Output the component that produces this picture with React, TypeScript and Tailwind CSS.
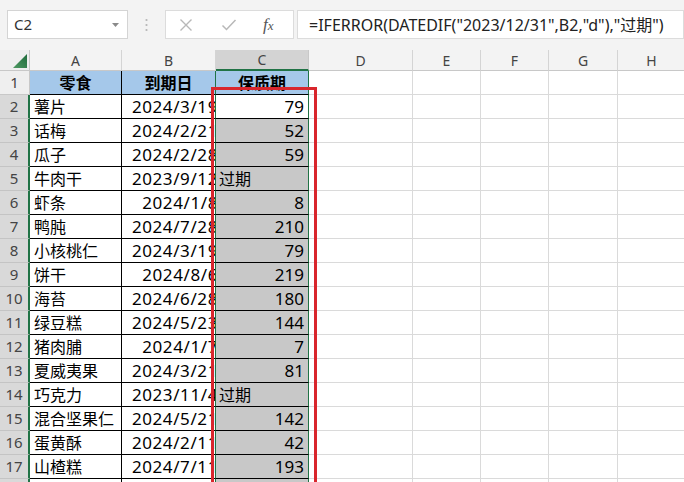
import React from "react";

type Row = [string, string, string];

const rows: Row[] = [
  ["薯片", "2024/3/19", "79"],
  ["话梅", "2024/2/21", "52"],
  ["瓜子", "2024/2/28", "59"],
  ["牛肉干", "2023/9/12", "过期"],
  ["虾条", "2024/1/8", "8"],
  ["鸭肫", "2024/7/28", "210"],
  ["小核桃仁", "2024/3/19", "79"],
  ["饼干", "2024/8/6", "219"],
  ["海苔", "2024/6/28", "180"],
  ["绿豆糕", "2024/5/23", "144"],
  ["猪肉脯", "2024/1/7", "7"],
  ["夏威夷果", "2024/3/21", "81"],
  ["巧克力", "2023/11/4", "过期"],
  ["混合坚果仁", "2024/5/21", "142"],
  ["蛋黄酥", "2024/2/11", "42"],
  ["山楂糕", "2024/7/11", "193"],
  ["", "", ""],
];

const letters = ["A", "B", "C", "D", "E", "F", "G", "H"];
const font = { fontFamily: '"Noto Sans", "Noto Sans CJK SC", sans-serif' };

function EmptyCells() {
  return (
    <>
      {[0, 1, 2, 3, 4].map((i) => (
        <div key={i} className="h-[24px] border-r border-b border-[#dadada] bg-white" />
      ))}
    </>
  );
}

export default function App() {
  return (
    <div className="w-[684px] h-[482px] overflow-hidden bg-white text-black" style={font}>
      {/* formula bar */}
      <div className="h-[50px] bg-[#f3f3f3] flex items-start pt-[10px]">
        <div className="ml-[7px] w-[121px] h-[29px] bg-white border border-[#d4d4d4] flex items-center justify-between pl-[6px] pr-[8px]">
          <span className="text-[15px] text-[#333]">C2</span>
          <svg width="7" height="4" viewBox="0 0 7 4">
            <path d="M0 0 L7 0 L3.5 4 Z" fill="#8a8a8a" />
          </svg>
        </div>
        <div className="w-[37px] h-[29px] flex items-center justify-center">
          <svg width="3" height="14" viewBox="0 0 3 14">
            <circle cx="1.5" cy="2" r="1.1" fill="#b5b5b5" />
            <circle cx="1.5" cy="7" r="1.1" fill="#b5b5b5" />
            <circle cx="1.5" cy="12" r="1.1" fill="#b5b5b5" />
          </svg>
        </div>
        <div className="w-[129px] h-[29px] bg-white border border-[#dcdcdc] flex items-center">
          <svg className="ml-[13px]" width="14" height="14" viewBox="0 0 14 14">
            <path d="M1.5 1.5 L12.5 12.5 M12.5 1.5 L1.5 12.5" stroke="#b8b8b8" strokeWidth="1.4" />
          </svg>
          <svg className="ml-[28px]" width="16" height="14" viewBox="0 0 16 14">
            <path d="M1.5 7.5 L5.5 11.5 L14.5 2" stroke="#b8b8b8" strokeWidth="1.5" fill="none" />
          </svg>
          <span
            className="ml-[26px] text-[17px] italic text-[#555]"
            style={{ fontFamily: '"Liberation Serif", serif' }}
          >
            f<span className="text-[13px]">x</span>
          </span>
        </div>
        <div className="ml-[3px] flex-1 h-[29px] bg-white border border-[#dcdcdc] flex items-center pl-[11px] whitespace-nowrap overflow-hidden">
          <span className="text-[16px] text-[#222]">
            =IFERROR(DATEDIF("2023/12/31",B2,"d"),"过期")
          </span>
        </div>
      </div>

      {/* sheet */}
      <div className="relative">
        <div className="grid grid-cols-[30px_92px_94px_93px_104px_68px_68px_69px_68px]">
          {/* column headers */}
          <div className="h-[21px] bg-[#efefef] border-r border-b border-[#c8c8c8] relative">
            <svg className="absolute right-[2px] bottom-[2px]" width="14" height="14" viewBox="0 0 14 14">
              <defs>
                <linearGradient id="corner" x1="0" y1="1" x2="1" y2="0">
                  <stop offset="0" stopColor="#4f9a63" />
                  <stop offset="1" stopColor="#1f6b3c" />
                </linearGradient>
              </defs>
              <path d="M0 14 L14 14 L14 0 Z" fill="url(#corner)" />
            </svg>
          </div>
          {letters.map((l) =>
            l === "C" ? (
              <div
                key={l}
                className="h-[21px] bg-[#d3d3d3] border-r border-[#c8c8c8] border-b-2 border-b-[#217346] flex items-center justify-center text-[14px] text-[#444]"
              >
                {l}
              </div>
            ) : (
              <div
                key={l}
                className="h-[21px] bg-[#f3f3f3] border-r border-[#d4d4d4] border-b border-b-[#c8c8c8] flex items-center justify-center text-[14px] text-[#444]"
              >
                {l}
              </div>
            )
          )}

          {/* header row 1 */}
          <div className="h-[24px] bg-[#efefef] border-r border-b border-[#c8c8c8] flex items-center justify-center text-[15px] text-[#444]">
            1
          </div>
          <div className="h-[24px] bg-[#a5c8ea] border-r border-b border-black flex items-center justify-center text-[16px] font-bold">
            零食
          </div>
          <div className="h-[24px] bg-[#a5c8ea] border-r border-b border-r-[#217346] border-b-black flex items-center justify-center text-[16px] font-bold">
            到期日
          </div>
          <div className="h-[24px] bg-[#a5c8ea] border-r border-b border-r-[#217346] border-b-black flex items-center justify-center text-[16px] font-bold">
            保质期
          </div>
          <EmptyCells />

          {/* data rows */}
          {rows.map(([name, date, days], i) => {
            const n = i + 2;
            const active = n === 2;
            const isText = days === "过期";
            return (
              <React.Fragment key={n}>
                <div className="h-[24px] bg-[#d9d9d9] border-r-2 border-r-[#217346] border-b border-b-[#c4c4c4] flex items-center justify-center text-[15px] text-[#444]">
                  {n}
                </div>
                <div className="h-[24px] bg-white border-r border-b border-black flex items-center pl-[4px] text-[16px] whitespace-nowrap overflow-hidden">
                  {name}
                </div>
                <div className="h-[24px] bg-white border-r border-b border-r-[#217346] border-b-black flex items-center justify-end text-[17px] tracking-[0.6px] whitespace-nowrap overflow-hidden">
                  <span className="-mr-[3px]">{date}</span>
                </div>
                <div
                  className={
                    active
                      ? "h-[24px] bg-white border-r border-b border-r-[#217346] border-b-black flex items-center justify-end pr-[4px] text-[17px]"
                      : isText
                      ? "h-[24px] bg-[#c8c8c8] border-r border-b border-r-[#217346] border-b-black flex items-center justify-start pl-[3px] text-[16px]"
                      : "h-[24px] bg-[#c8c8c8] border-r border-b border-r-[#217346] border-b-black flex items-center justify-end pr-[4px] text-[17px]"
                  }
                >
                  {days}
                </div>
                <EmptyCells />
              </React.Fragment>
            );
          })}
        </div>

        {/* red highlight frame over column C */}
        <div className="absolute left-[211px] top-[37px] w-[106px] h-[460px] border-[3px] border-[#d9262d] pointer-events-none" />
      </div>
    </div>
  );
}
